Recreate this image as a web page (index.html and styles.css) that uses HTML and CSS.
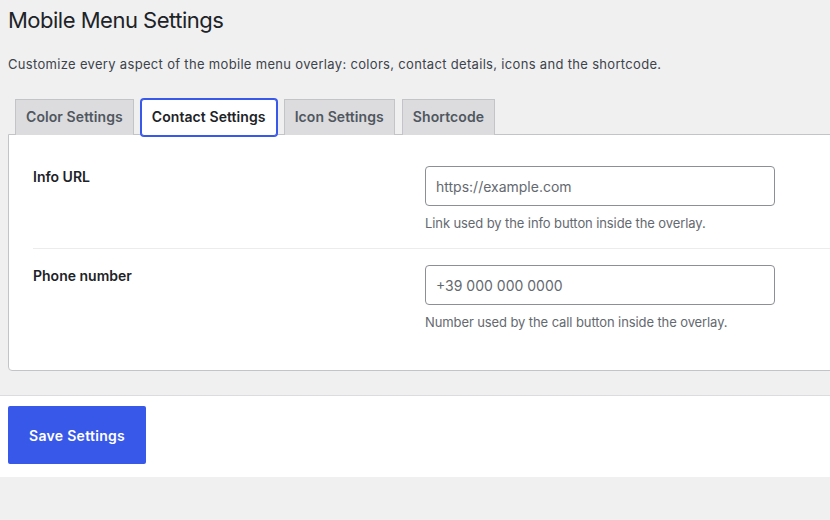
FILE: index.html
```html
<!DOCTYPE html>
<html lang="en">
<head>
    <meta charset="UTF-8">
    <meta name="viewport" content="width=device-width, initial-scale=1.0">
    <title>Mobile Menu Settings</title>
    <link rel="stylesheet" href="styles.css">
</head>
<body>

<div class="wrap">
    <h1 class="page-title">Mobile Menu Settings</h1>
    <p class="page-desc">Customize every aspect of the mobile menu overlay: colors, contact details, icons and the shortcode.</p>

    <!-- Tabs -->
    <div class="nav-tabs">
        <a class="nav-tab">Color Settings</a>
        <a class="nav-tab nav-tab-active">Contact Settings</a>
        <a class="nav-tab">Icon Settings</a>
        <a class="nav-tab">Shortcode</a>
    </div>

    <!-- Contact settings panel -->
    <div class="panel">
        <div class="field-row">
            <label class="field-label" for="infoUrl">Info URL</label>
            <div class="field-control">
                <input type="text" id="infoUrl" class="text-input" placeholder="https://example.com">
                <p class="field-help">Link used by the info button inside the overlay.</p>
            </div>
        </div>
        <div class="field-row">
            <label class="field-label" for="phone">Phone number</label>
            <div class="field-control">
                <input type="text" id="phone" class="text-input" placeholder="+39 000 000 0000">
                <p class="field-help">Number used by the call button inside the overlay.</p>
            </div>
        </div>
    </div>
</div>

<div class="footer-bar">
    <button class="save-button">Save Settings</button>
</div>

</body>
</html>
```

FILE: styles.css
```css
html, body {
    margin: 0;
    padding: 0;
    background-color: #f0f0f1;
    overflow: hidden;
}
body {
    font-family: Inter, "Noto Sans", sans-serif;
    color: #3c434a;
    font-size: 13px;
}
.wrap {
    padding: 0 0 0 8px;
}
.page-title {
    font-size: 22px;
    font-weight: 400;
    line-height: 30px;
    letter-spacing: -0.5px;
    color: #1d2327;
    margin: 5px 0 0;
}
.page-desc {
    font-size: 13px;
    line-height: 20px;
    letter-spacing: 0.32px;
    margin: 19px 0 0;
    color: #3c434a;
}

/* Tabs */
.nav-tabs {
    display: flex;
    margin-top: 25px;
    position: relative;
    z-index: 1;
}
.nav-tab {
    display: block;
    margin-left: 7px;
    margin-bottom: -1px;
    padding: 5px 10px 6px;
    font-size: 14px;
    font-weight: 600;
    line-height: 24px;
    letter-spacing: 0.08px;
    color: #50575e;
    background-color: #dcdcde;
    border: 1px solid #c3c4c7;
    border-bottom: none;
    cursor: pointer;
}
.nav-tab-active {
    background-color: #fff;
    color: #1d2327;
    border: 1px solid #3858e9;
    border-radius: 3px;
    box-shadow: 0 0 0 1px #3858e9;
    margin-bottom: -2px;
}

/* Panel */
.panel {
    background-color: #fff;
    border: 1px solid #c3c4c7;
    border-radius: 0 0 0 4px;
    margin-right: -20px;
    padding: 15px 0 23px 24px;
}
.field-row {
    display: grid;
    grid-template-columns: 392px 1fr;
    padding: 16px 0;
}
.field-row + .field-row {
    border-top: 1px solid #ececec;
}
.field-label {
    font-size: 14px;
    font-weight: 600;
    line-height: 18px;
    color: #1d2327;
    padding-top: 2px;
}
.text-input {
    display: block;
    box-sizing: border-box;
    width: 350px;
    height: 40px;
    padding: 0 10px;
    border: 1px solid #8c8f94;
    border-radius: 4px;
    font-family: inherit;
    font-size: 14px;
    color: #2c3338;
    background: #fff;
}
.text-input::placeholder {
    color: #646970;
}
.field-help {
    margin: 8px 0 0;
    font-size: 13px;
    line-height: 18px;
    letter-spacing: -0.1px;
    color: #646970;
}

/* Footer */
.footer-bar {
    margin-top: 24px;
    background-color: #fff;
    border-top: 1px solid #dcdcde;
    padding: 10px 8px 13px;
}
.save-button {
    display: block;
    height: 58px;
    padding: 0 21px;
    background-color: #3858e9;
    color: #fff;
    border: none;
    border-radius: 2px;
    font-family: inherit;
    font-size: 14px;
    font-weight: 600;
    letter-spacing: 0.3px;
    cursor: pointer;
}
```
